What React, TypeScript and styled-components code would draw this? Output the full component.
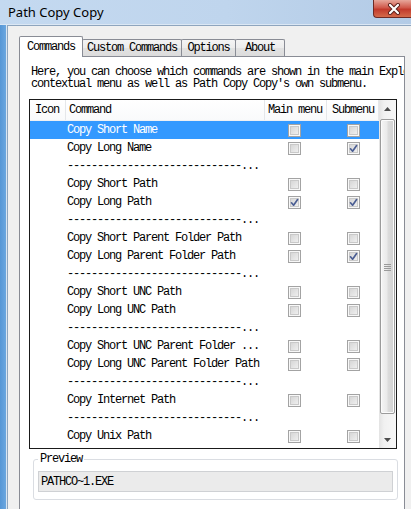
import styled, { createGlobalStyle } from 'styled-components';

const MONO = `"Liberation Mono", "Noto Sans CJK SC", monospace`;

const GlobalStyle = createGlobalStyle`
  html, body {
    margin: 0;
    padding: 0;
  }
  body {
    width: 411px;
    height: 509px;
    overflow: hidden;
    background: #f0f0f0;
  }
  * {
    box-sizing: border-box;
  }
`;

interface Command {
  name: string;
  main?: boolean;
  sub?: boolean;
  separator?: boolean;
}

const SEP = '-----------------------------...';

const commands: Command[] = [
  { name: 'Copy Short Name' },
  { name: 'Copy Long Name', sub: true },
  { name: SEP, separator: true },
  { name: 'Copy Short Path' },
  { name: 'Copy Long Path', main: true, sub: true },
  { name: SEP, separator: true },
  { name: 'Copy Short Parent Folder Path' },
  { name: 'Copy Long Parent Folder Path', sub: true },
  { name: SEP, separator: true },
  { name: 'Copy Short UNC Path' },
  { name: 'Copy Long UNC Path' },
  { name: SEP, separator: true },
  { name: 'Copy Short UNC Parent Folder ...' },
  { name: 'Copy Long UNC Parent Folder Path' },
  { name: SEP, separator: true },
  { name: 'Copy Internet Path' },
  { name: SEP, separator: true },
  { name: 'Copy Unix Path' },
  { name: 'Copy Cygwin Path' },
];

const tabs = [
  { label: 'Commands', width: 64 },
  { label: 'Custom Commands', width: 100 },
  { label: 'Options', width: 55 },
  { label: 'About', width: 50 },
];

const CheckBox = ({ checked }: { checked?: boolean }) => (
  <Box>
    {checked && (
      <svg width="11" height="11" viewBox="0 0 11 11">
        <path
          d="M2.5 5.8 L4.6 8.2 L8.6 2.6"
          fill="none"
          stroke="#4b5e93"
          strokeWidth="1.7"
          strokeLinecap="round"
          strokeLinejoin="round"
        />
      </svg>
    )}
  </Box>
);

export default function App() {
  return (
    <>
      <GlobalStyle />
      <Window>
        <TitleBar>
          <Title>Path Copy Copy</Title>
          <CloseButton>
            <svg width="14" height="12" viewBox="0 0 14 12">
              <path
                d="M3 2 L11 10 M11 2 L3 10"
                stroke="#5a1f1a"
                strokeWidth="4"
                strokeLinecap="round"
              />
              <path
                d="M3 2 L11 10 M11 2 L3 10"
                stroke="#ffffff"
                strokeWidth="2.2"
                strokeLinecap="round"
              />
            </svg>
          </CloseButton>
        </TitleBar>
        <Body>
          <Frame />
          <Client>
            <TabStrip>
              {tabs.map((t, i) => (
                <Tab key={t.label} $active={i === 0} $width={t.width}>
                  {t.label}
                </Tab>
              ))}
            </TabStrip>
            <Panel>
              <Description>
                Here, you can choose which commands are shown in the main Explorer
                <br />
                contextual menu as well as Path Copy Copy's own submenu.
              </Description>
              <ListBox>
                <ListContent>
                  <HeaderRow>
                    <HeaderCell>Icon</HeaderCell>
                    <HeaderCell>Command</HeaderCell>
                    <HeaderCell>Main menu</HeaderCell>
                    <HeaderCell>Submenu</HeaderCell>
                  </HeaderRow>
                  {commands.map((c, i) => (
                    <Row key={i} $selected={i === 0}>
                      <span />
                      <NameCell>{c.name}</NameCell>
                      <MainCell>{!c.separator && <CheckBox checked={c.main} />}</MainCell>
                      <SubCell>{!c.separator && <CheckBox checked={c.sub} />}</SubCell>
                    </Row>
                  ))}
                </ListContent>
                <ScrollBar>
                  <ArrowButton>
                    <svg width="7" height="4" viewBox="0 0 7 4">
                      <polygon points="0,4 3.5,0 7,4" fill="#4d4d4d" />
                    </svg>
                  </ArrowButton>
                  <Track>
                    <Thumb>
                      <svg width="7" height="8" viewBox="0 0 7 8">
                        <path d="M0 1.5h7M0 3.5h7M0 5.5h7M0 7.5h7" stroke="#9a9a9a" strokeWidth="1" />
                      </svg>
                    </Thumb>
                  </Track>
                  <ArrowButton>
                    <svg width="7" height="4" viewBox="0 0 7 4">
                      <polygon points="0,0 7,0 3.5,4" fill="#4d4d4d" />
                    </svg>
                  </ArrowButton>
                </ScrollBar>
              </ListBox>
              <Group>
                <Legend>Preview</Legend>
                <PreviewBox>PATHCO~1.EXE</PreviewBox>
              </Group>
            </Panel>
          </Client>
        </Body>
      </Window>
    </>
  );
}

const Window = styled.div`
  width: 411px;
  height: 509px;
  display: flex;
  flex-direction: column;
  overflow: hidden;
  background: #c3d8ef;
`;

const TitleBar = styled.div`
  height: 25px;
  flex: none;
  display: flex;
  justify-content: space-between;
  align-items: flex-start;
  background: linear-gradient(to right, #c4d9f0, #bfd5ed 55%, #b3cbe6);
  border-bottom: 1px solid #dbe7f4;
`;

const Title = styled.div`
  padding: 4px 0 0 8px;
  font-family: "Noto Sans", "Open Sans", sans-serif;
  font-size: 13px;
  line-height: 16px;
  color: #000;
`;

const CloseButton = styled.div`
  width: 38px;
  height: 18px;
  display: flex;
  align-items: center;
  justify-content: center;
  padding-left: 2px;
  border: 1px solid #6e2a24;
  border-top: none;
  border-right: none;
  border-bottom-left-radius: 4px;
  background: linear-gradient(to bottom, #e7a79b, #d0594b 45%, #c23a2c 55%, #d46a4a);
`;

const Body = styled.div`
  flex: 1;
  display: flex;
  min-height: 0;
`;

const Frame = styled.div`
  width: 8px;
  flex: none;
  background: linear-gradient(to right, #5596d6, #6aa6df 70%, #d9e6f3 75%, #d9e6f3 87%, #8ea5be 88%);
`;

const Client = styled.div`
  flex: 1;
  display: flex;
  flex-direction: column;
  background: #f0f0f0;
  border-top: 1px solid #8ea5be;
  padding: 9px 6px 0 11px;
  min-width: 0;
`;

const TabStrip = styled.div`
  display: flex;
  align-items: flex-end;
  height: 21px;
  position: relative;
  z-index: 1;
`;

interface TabProps {
  $active: boolean;
  $width: number;
}

const Tab = styled.div<TabProps>`
  width: ${(p) => p.$width}px;
  height: ${(p) => (p.$active ? 21 : 17)}px;
  margin-left: -1px;
  margin-bottom: ${(p) => (p.$active ? -1 : 0)}px;
  padding-top: ${(p) => (p.$active ? 3 : 1)}px;
  border: 1px solid #898c95;
  border-bottom: none;
  border-radius: 2px 2px 0 0;
  background: ${(p) =>
    p.$active ? '#ffffff' : 'linear-gradient(to bottom, #f4f4f4, #ececec 50%, #e2e2e2 51%, #dcdcdc)'};
  font-family: ${MONO};
  font-size: 12px;
  letter-spacing: -1.2px;
  line-height: 14px;
  text-align: center;
  color: #000;
  white-space: nowrap;
  &:first-child {
    margin-left: 0;
  }
`;

const Panel = styled.div`
  flex: 1;
  display: flex;
  flex-direction: column;
  background: #ffffff;
  border: 1px solid #898c95;
  border-bottom: none;
  padding-top: 9px;
  min-height: 0;
`;

const Description = styled.div`
  padding-left: 11px;
  font-family: ${MONO};
  font-size: 12px;
  letter-spacing: -1.2px;
  line-height: 12px;
  white-space: nowrap;
  overflow: hidden;
  color: #000;
`;

const ListBox = styled.div`
  margin: 9px 0 0 9px;
  width: 368px;
  height: 350px;
  flex: none;
  display: flex;
  border: 1px solid #1a1a1a;
  background: #ffffff;
`;

const ListContent = styled.div`
  width: 349px;
  overflow: hidden;
  font-family: ${MONO};
  font-size: 12px;
  letter-spacing: -1.2px;
  color: #000;
`;

const COLUMNS = '36px 199px 62px 52px';

const HeaderRow = styled.div`
  display: grid;
  grid-template-columns: ${COLUMNS};
  height: 21px;
  align-items: center;
  border-bottom: 1px solid #eef0f3;
  background: linear-gradient(to bottom, #ffffff, #f9fafb);
`;

const HeaderCell = styled.div`
  height: 100%;
  display: flex;
  align-items: center;
  padding-left: 5px;
  border-right: 1px solid #e5e7ea;
  white-space: nowrap;
  overflow: hidden;
  &:nth-child(2),
  &:nth-child(3) {
    padding-left: 3px;
  }
`;

const Row = styled.div<{ $selected: boolean }>`
  display: grid;
  grid-template-columns: ${COLUMNS};
  height: 18px;
  align-items: center;
  background: ${(p) => (p.$selected ? '#3399ff' : 'transparent')};
  color: ${(p) => (p.$selected ? '#ffffff' : '#000000')};
`;

const NameCell = styled.div`
  padding-left: 1px;
  white-space: nowrap;
  overflow: hidden;
  line-height: 18px;
`;

const MainCell = styled.div`
  display: flex;
  padding-left: 23px;
`;

const SubCell = styled.div`
  display: flex;
  padding-left: 20px;
`;

const Box = styled.div`
  width: 13px;
  height: 13px;
  display: flex;
  align-items: center;
  justify-content: center;
  border: 1px solid #a3a3a3;
  background: linear-gradient(135deg, #d0d0d0, #eeeeee 80%, #f6f6f6);
  box-shadow: inset 0 0 0 1px #f8f8f8, inset 0 0 0 2px #c9c9c9;
`;

const ScrollBar = styled.div`
  width: 17px;
  display: flex;
  flex-direction: column;
  background: linear-gradient(to right, #e3e3e3, #f1f1f1 30%, #f7f7f7);
`;

const ArrowButton = styled.div`
  height: 17px;
  flex: none;
  display: flex;
  align-items: center;
  justify-content: center;
`;

const Track = styled.div`
  flex: 1;
  padding-top: 2px;
`;

const Thumb = styled.div`
  height: 295px;
  margin: 0 1px;
  display: flex;
  align-items: center;
  justify-content: center;
  border: 1px solid #9b9b9b;
  border-radius: 2px;
  background: linear-gradient(to right, #f5f5f5, #eaeaea 45%, #dcdcdc 55%, #d2d2d2);
  box-shadow: inset 0 0 0 1px #fbfbfb;
`;

const Group = styled.fieldset`
  margin: 4px 0 0 13px;
  width: 365px;
  padding: 0 4px 7px 4px;
  border: 1px solid #dadde2;
  border-radius: 3px;
`;

const Legend = styled.legend`
  padding: 0 2px;
  font-family: ${MONO};
  font-size: 12px;
  letter-spacing: -1.2px;
  line-height: 12px;
  color: #000;
`;

const PreviewBox = styled.div`
  margin-top: 6px;
  height: 21px;
  padding-left: 2px;
  display: flex;
  align-items: center;
  border: 1px solid #cfd1d4;
  background: #ebebeb;
  font-family: ${MONO};
  font-size: 12px;
  letter-spacing: -1.2px;
  color: #000;
`;
